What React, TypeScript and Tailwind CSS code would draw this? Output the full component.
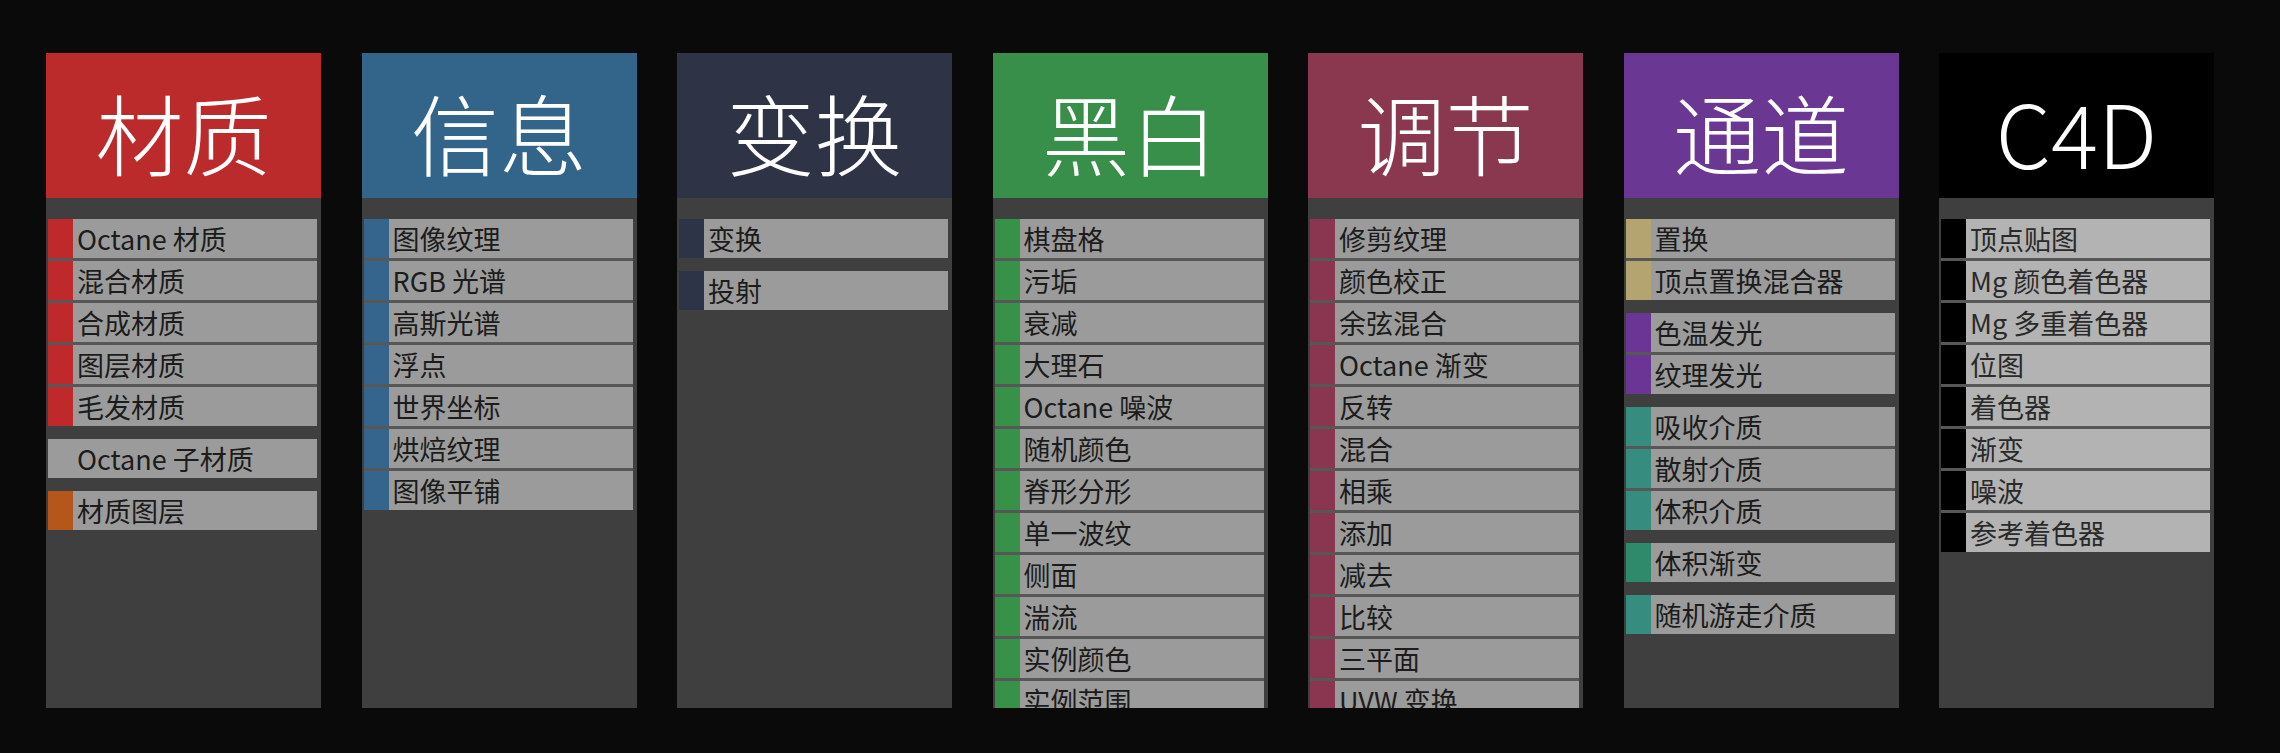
type Row = { label: string; bar: string };

type Column = {
  title: string;
  head: string;
  rowBg: string;
  rowText: string;
  groups: Row[][];
};

const red = "bg-[#c0292b]";
const blue = "bg-[#35658d]";
const navy = "bg-[#2e3447]";
const green = "bg-[#389149]";
const maroon = "bg-[#8a3650]";
const tan = "bg-[#b3a470]";
const purple = "bg-[#6b3595]";
const teal = "bg-[#378c80]";
const black = "bg-black";

const rows = (bar: string, labels: string[]): Row[] =>
  labels.map((label) => ({ label, bar }));

const columns: Column[] = [
  {
    title: "材质",
    head: "bg-[#bb2b2c]",
    rowBg: "bg-[#9b9b9b]",
    rowText: "text-[#1c1c1c]",
    groups: [
      rows(red, ["Octane 材质", "混合材质", "合成材质", "图层材质", "毛发材质"]),
      rows("bg-[#9b9b9b]", ["Octane 子材质"]),
      rows("bg-[#b5561b]", ["材质图层"]),
    ],
  },
  {
    title: "信息",
    head: "bg-[#33648a]",
    rowBg: "bg-[#9b9b9b]",
    rowText: "text-[#1c1c1c]",
    groups: [
      rows(blue, ["图像纹理", "RGB 光谱", "高斯光谱", "浮点", "世界坐标", "烘焙纹理", "图像平铺"]),
    ],
  },
  {
    title: "变换",
    head: "bg-[#2e3345]",
    rowBg: "bg-[#9b9b9b]",
    rowText: "text-[#1c1c1c]",
    groups: [rows(navy, ["变换"]), rows(navy, ["投射"])],
  },
  {
    title: "黑白",
    head: "bg-[#378f4a]",
    rowBg: "bg-[#9b9b9b]",
    rowText: "text-[#1c1c1c]",
    groups: [
      rows(green, [
        "棋盘格",
        "污垢",
        "衰减",
        "大理石",
        "Octane 噪波",
        "随机颜色",
        "脊形分形",
        "单一波纹",
        "侧面",
        "湍流",
        "实例颜色",
        "实例范围",
      ]),
    ],
  },
  {
    title: "调节",
    head: "bg-[#8a3850]",
    rowBg: "bg-[#9b9b9b]",
    rowText: "text-[#1c1c1c]",
    groups: [
      rows(maroon, [
        "修剪纹理",
        "颜色校正",
        "余弦混合",
        "Octane 渐变",
        "反转",
        "混合",
        "相乘",
        "添加",
        "减去",
        "比较",
        "三平面",
        "UVW 变换",
      ]),
    ],
  },
  {
    title: "通道",
    head: "bg-[#6a3792]",
    rowBg: "bg-[#9b9b9b]",
    rowText: "text-[#1c1c1c]",
    groups: [
      rows(tan, ["置换", "顶点置换混合器"]),
      rows(purple, ["色温发光", "纹理发光"]),
      rows(teal, ["吸收介质", "散射介质", "体积介质"]),
      rows("bg-[#2f8a6c]", ["体积渐变"]),
      rows(teal, ["随机游走介质"]),
    ],
  },
  {
    title: "C4D",
    head: "bg-black",
    rowBg: "bg-[#b3b3b3]",
    rowText: "text-[#2a2a2a]",
    groups: [
      rows(black, [
        "顶点贴图",
        "Mg 颜色着色器",
        "Mg 多重着色器",
        "位图",
        "着色器",
        "渐变",
        "噪波",
        "参考着色器",
      ]),
    ],
  },
];

function NodeColumn({ col }: { col: Column }) {
  return (
    <div className="flex h-[655px] w-[275px] flex-col overflow-hidden">
      <div
        className={`flex h-[145px] shrink-0 items-center justify-center pt-[10px] text-[88px] font-light leading-none text-white ${col.head}`}
      >
        {col.title}
      </div>
      {/* rows get clipped at the bottom, same as the node panel does */}
      <div className="flex flex-1 flex-col gap-[13px] bg-[#3f3f3f] pt-[21px] pl-[2px] pr-[4px]">
        {col.groups.map((g, gi) => (
          <div key={gi} className="flex flex-col gap-[3px] bg-[#575757]">
            {g.map((r) => (
              <div key={r.label} className="flex h-[39px] shrink-0">
                <div className={`w-[25px] shrink-0 ${r.bar}`} />
                <div
                  className={`flex-1 pl-[4px] text-[27px] leading-[39px] whitespace-nowrap ${col.rowBg} ${col.rowText}`}
                >
                  {r.label}
                </div>
              </div>
            ))}
          </div>
        ))}
      </div>
    </div>
  );
}

export default function App() {
  return (
    <div className="h-[753px] w-[2280px] bg-[#0a0a0a] pl-[46px] pt-[53px] font-['Noto_Sans_CJK_SC',sans-serif]">
      <div className="flex gap-[40.5px]">
        {columns.map((c) => (
          <NodeColumn key={c.title} col={c} />
        ))}
      </div>
    </div>
  );
}
